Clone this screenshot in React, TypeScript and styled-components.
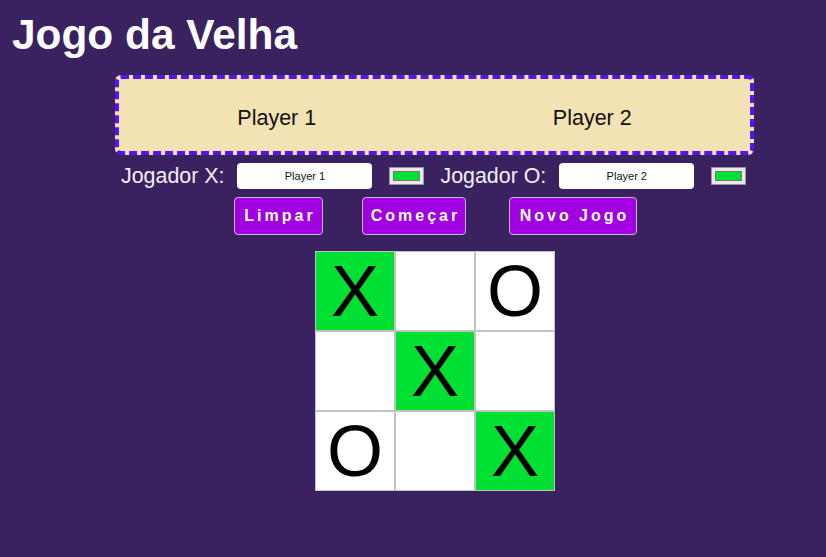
import styled, { createGlobalStyle } from 'styled-components';

const GlobalStyle = createGlobalStyle`
  body {
    margin: 0;
    background: #3a2160;
    font-family: 'Liberation Sans', Arial, sans-serif;
  }
`;

const Page = styled.div`
  width: 826px;
  height: 557px;
  padding: 0 0 0 10px;
  box-sizing: border-box;
`;

const Title = styled.h1`
  margin: 0;
  padding: 10px 0 0 2px;
  font-size: 42.4px;
  line-height: 50px;
  font-weight: 700;
  color: #ffffff;
`;

const Banner = styled.div`
  margin: 15px 0 0 105px;
  width: 639px;
  height: 80px;
  box-sizing: border-box;
  display: flex;
  align-items: center;
  background: #f3e2b3;
  border: 4px dashed #5a12ee;
  border-radius: 6px;
`;

const BannerName = styled.div`
  flex: 1;
  text-align: center;
  font-size: 21.5px;
  color: #111;
  padding-top: 7px;
`;

const PlayerRow = styled.div`
  display: flex;
  align-items: center;
  margin: 7px 0 0 111px;
  height: 28px;
`;

const Label = styled.label`
  font-size: 21.4px;
  color: #f2f0f5;
  margin-right: 13px;
`;

const NameInput = styled.input`
  width: 135px;
  height: 26px;
  box-sizing: border-box;
  border: none;
  border-radius: 4px;
  background: #fff;
  text-align: center;
  font-family: 'Liberation Sans', Arial, sans-serif;
  font-size: 11px;
  color: #111;
  margin-right: 17px;
  padding: 0;
`;

const Swatch = styled.div<{ $color?: string }>`
  width: 35px;
  height: 18px;
  box-sizing: border-box;
  background: #e9e9ed;
  border: 1px solid #9a9aa0;
  padding: 3px;
  margin-right: 16px;

  span {
    display: block;
    height: 100%;
    background: ${(p) => p.$color ?? '#00e033'};
    border: 1px solid #777;
    box-sizing: border-box;
  }
`;

const ButtonRow = styled.div`
  display: flex;
  gap: 39px;
  margin: 7px 0 0 224px;
`;

const ActionButton = styled.button<{ $w: number; $gap?: number }>`
  width: ${(p) => p.$w}px;
  height: 38px;
  background: #a100e0;
  border: 1px solid #c8b8d8;
  border-radius: 4px;
  color: #fff;
  font-family: 'Liberation Sans', Arial, sans-serif;
  font-weight: 700;
  font-size: 16px;
  letter-spacing: 3px;
  padding: 0 0 0 3px;
  margin-right: ${(p) => p.$gap ?? 0}px;
`;

const Board = styled.div`
  display: grid;
  grid-template-columns: repeat(3, 80px);
  grid-template-rows: repeat(3, 80px);
  width: 240px;
  margin: 16px 0 0 305px;
`;

const Cell = styled.div<{ $win?: boolean }>`
  box-sizing: border-box;
  border: 1px solid #c2c2c2;
  background: ${(p) => (p.$win ? '#00e033' : '#ffffff')};
  display: flex;
  align-items: center;
  justify-content: center;
  font-size: 72px;
  line-height: 1;
  color: #000;
`;

const cells = [
  { v: 'X', win: true },
  { v: '', win: false },
  { v: 'O', win: false },
  { v: '', win: false },
  { v: 'X', win: true },
  { v: '', win: false },
  { v: 'O', win: false },
  { v: '', win: false },
  { v: 'X', win: true },
];

export default function App() {
  return (
    <Page>
      <GlobalStyle />
      <Title>Jogo da Velha</Title>
      <Banner>
        <BannerName>Player 1</BannerName>
        <BannerName>Player 2</BannerName>
      </Banner>
      <PlayerRow>
        <Label>Jogador X:</Label>
        <NameInput defaultValue="Player 1" />
        <Swatch>
          <span />
        </Swatch>
        <Label>Jogador O:</Label>
        <NameInput defaultValue="Player 2" />
        <Swatch>
          <span />
        </Swatch>
      </PlayerRow>
      <ButtonRow>
        <ActionButton $w={89}>Limpar</ActionButton>
        <ActionButton $w={104} $gap={4}>Começar</ActionButton>
        <ActionButton $w={128}>Novo Jogo</ActionButton>
      </ButtonRow>
      <Board>
        {cells.map((c, i) => (
          <Cell key={i} $win={c.win}>
            {c.v}
          </Cell>
        ))}
      </Board>
    </Page>
  );
}
